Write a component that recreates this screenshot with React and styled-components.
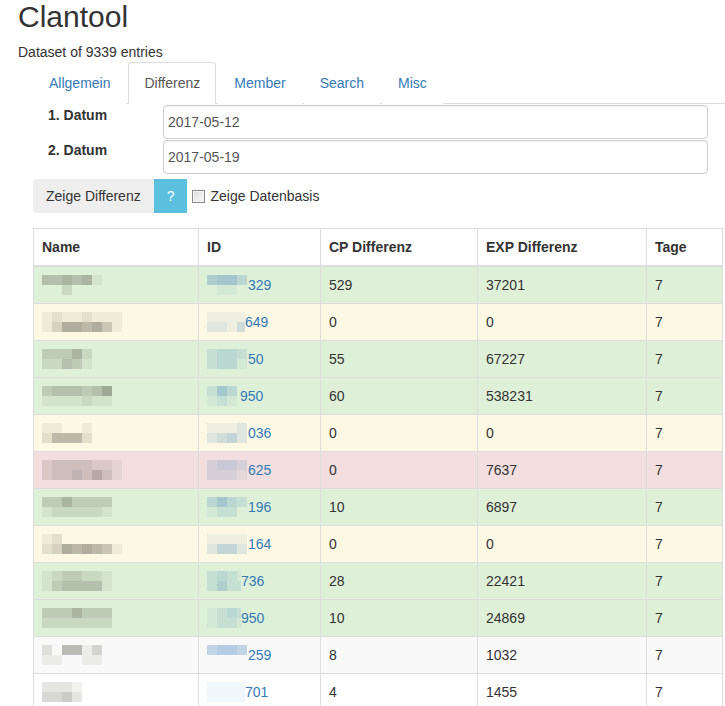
import React from 'react'
import styled, { createGlobalStyle } from 'styled-components'

const GlobalStyle = createGlobalStyle`
  html, body {
    margin: 0;
    padding: 0;
    overflow: hidden;
  }
  body {
    font-family: "Liberation Sans", Arial, sans-serif;
    font-size: 14px;
    line-height: 20px;
    color: #333;
    background: #fff;
  }
  * { box-sizing: border-box; }
`

const Page = styled.div`
  padding-left: 18px;
`

const Title = styled.h1`
  font-size: 30px;
  font-weight: 500;
  line-height: 33px;
  margin: 0 0 9px;
`

const Info = styled.p`
  margin: 0;
`

const Panel = styled.div`
  margin-left: 15px;
`

const Tabs = styled.ul`
  display: flex;
  list-style: none;
  margin: 0;
  padding: 0;
  border-bottom: 1px solid #ddd;
`

const Tab = styled.li`
  margin-right: 2px;
  margin-bottom: -1px;
  padding: 10px 15px;
  border: 1px solid ${p => (p.$active ? '#ddd' : 'transparent')};
  border-bottom-color: ${p => (p.$active ? '#fff' : 'transparent')};
  border-radius: 4px 4px 0 0;
  background: #fff;
  color: ${p => (p.$active ? '#555' : '#337ab7')};
  cursor: pointer;
`

const DateForm = styled.div`
  display: grid;
  grid-template-columns: 130px 1fr;
  row-gap: 1px;
  padding: 1px 17px 0 0;
`

const Label = styled.label`
  font-weight: bold;
  padding-left: 15px;
  line-height: 20px;
`

const DateInput = styled.input`
  height: 34px;
  border: 1px solid #ccc;
  border-radius: 4px;
  padding: 0 4px;
  font-family: inherit;
  font-size: 14px;
  color: #555;
  box-shadow: inset 0 1px 1px rgba(0, 0, 0, 0.05);
`

const Actions = styled.div`
  display: flex;
  align-items: center;
  margin-top: 5px;
`

const Button = styled.button`
  height: 34px;
  padding: 0 12px;
  border: 1px solid ${p => (p.$info ? '#5bc0de' : '#eee')};
  background: ${p => (p.$info ? '#5bc0de' : '#eee')};
  color: ${p => (p.$info ? '#fff' : '#333')};
  font-family: inherit;
  font-size: 14px;
  border-radius: ${p => (p.$info ? '0' : '4px 0 0 4px')};
`

const Check = styled.label`
  display: flex;
  align-items: center;
  gap: 5px;
  margin-left: 5px;
`

const Box = styled.span`
  width: 13px;
  height: 13px;
  border: 1px solid #8a8a8a;
  background: linear-gradient(135deg, #dcdcdc, #fafafa);
  box-shadow: inset 0 0 0 1px #f4f4f4;
`

const Table = styled.table`
  width: 689px;
  margin-top: 15px;
  border-collapse: collapse;
  table-layout: fixed;
  border: 1px solid #ddd;
`

const Th = styled.th`
  text-align: left;
  padding: 8px;
  border: 1px solid #ddd;
  border-bottom-width: 2px;
  vertical-align: bottom;
`

const Row = styled.tr`
  background: ${p =>
    ({ success: '#dff0d8', warning: '#fcf8e3', danger: '#f2dede', striped: '#f9f9f9' }[p.$kind] || '#fff')};
`

const Td = styled.td`
  padding: 8px;
  border: 1px solid #ddd;
  vertical-align: top;
`

const IdCell = styled.span`
  display: flex;
  align-items: center;
  color: #337ab7;
`

const MosaicBox = styled.span`
  display: flex;
  flex-direction: column;
  width: ${p => (p.$w ? `${p.$w}px` : 'auto')};
  height: 20px;
  overflow: hidden;
  flex-shrink: 0;
`

const MosaicRow = styled.span`
  display: flex;
  height: 10px;
`

const Px = styled.span`
  width: 10px;
  height: 10px;
  flex-shrink: 0;
  background: rgba(${p => p.$rgb}, ${p => p.$level * 0.07});
`

function Mosaic({ rows, rgb, width }) {
  return (
    <MosaicBox $w={width}>
      {rows.map((r, i) => (
        <MosaicRow key={i}>
          {[...r].map((d, j) => (
            <Px key={j} $rgb={rgb} $level={Number(d)} />
          ))}
        </MosaicRow>
      ))}
    </MosaicBox>
  )
}

const NAME_RGB = '70, 70, 60'
const ID_RGB = '51, 122, 183'

const data = [
  { kind: 'success', name: ['445451', '002000'], id: ['4553', '0110'], idw: 41, num: '329', cp: 529, exp: 37201 },
  { kind: 'warning', name: ['12112111', '13665641'], id: ['1111', '2213'], idw: 38, num: '649', cp: 0, exp: 0 },
  { kind: 'success', name: ['33352', '22431'], id: ['2332', '2331'], idw: 41, num: '50', cp: 55, exp: 67227 },
  { kind: 'success', name: ['3444346', '1111211'], id: ['253', '121'], idw: 33, num: '950', cp: 60, exp: 538231 },
  { kind: 'warning', name: ['11001', '25552'], id: ['1112', '2342'], idw: 41, num: '036', cp: 0, exp: 0 },
  { kind: 'danger', name: ['23333221', '23343531'], id: ['2332', '2221'], idw: 41, num: '625', cp: 0, exp: 7637 },
  { kind: 'success', name: ['3353333', '1222221'], id: ['3532', '1220'], idw: 41, num: '196', cp: 10, exp: 6897 },
  { kind: 'warning', name: ['12000000', '23656541'], id: ['1111', '2442'], idw: 41, num: '164', cp: 0, exp: 0 },
  { kind: 'success', name: ['1233221', '1344441'], id: ['2321', '2422'], idw: 34, num: '736', cp: 28, exp: 22421 },
  { kind: 'success', name: ['3335333', '2222222'], id: ['1232', '1221'], idw: 34, num: '950', cp: 10, exp: 24869 },
  { kind: 'striped', name: ['205513', '110011'], id: ['4554', '0000'], idw: 41, num: '259', cp: 8, exp: 1032 },
  { kind: 'plain', name: ['2221', '3342'], id: ['1111', '1111'], idw: 38, num: '701', cp: 4, exp: 1455 },
]

const tabs = ['Allgemein', 'Differenz', 'Member', 'Search', 'Misc']

export default function App() {
  return (
    <Page>
      <GlobalStyle />
      <Title>Clantool</Title>
      <Info>Dataset of 9339 entries</Info>
      <Panel>
        <Tabs>
          {tabs.map(t => (
            <Tab key={t} $active={t === 'Differenz'}>{t}</Tab>
          ))}
        </Tabs>
        <DateForm>
          <Label>1. Datum</Label>
          <DateInput defaultValue="2017-05-12" />
          <Label>2. Datum</Label>
          <DateInput defaultValue="2017-05-19" />
        </DateForm>
        <Actions>
          <Button>Zeige Differenz</Button>
          <Button $info>?</Button>
          <Check>
            <Box />
            Zeige Datenbasis
          </Check>
        </Actions>
        <Table>
          <colgroup>
            <col style={{ width: 165 }} />
            <col style={{ width: 122 }} />
            <col style={{ width: 157 }} />
            <col style={{ width: 169 }} />
            <col style={{ width: 76 }} />
          </colgroup>
          <thead>
            <tr>
              <Th>Name</Th>
              <Th>ID</Th>
              <Th>CP Differenz</Th>
              <Th>EXP Differenz</Th>
              <Th>Tage</Th>
            </tr>
          </thead>
          <tbody>
            {data.map((r, i) => (
              <Row key={i} $kind={r.kind}>
                <Td>
                  <Mosaic rows={r.name} rgb={NAME_RGB} />
                </Td>
                <Td>
                  <IdCell>
                    <Mosaic rows={r.id} rgb={ID_RGB} width={r.idw} />
                    {r.num}
                  </IdCell>
                </Td>
                <Td>{r.cp}</Td>
                <Td>{r.exp}</Td>
                <Td>7</Td>
              </Row>
            ))}
          </tbody>
        </Table>
      </Panel>
    </Page>
  )
}
